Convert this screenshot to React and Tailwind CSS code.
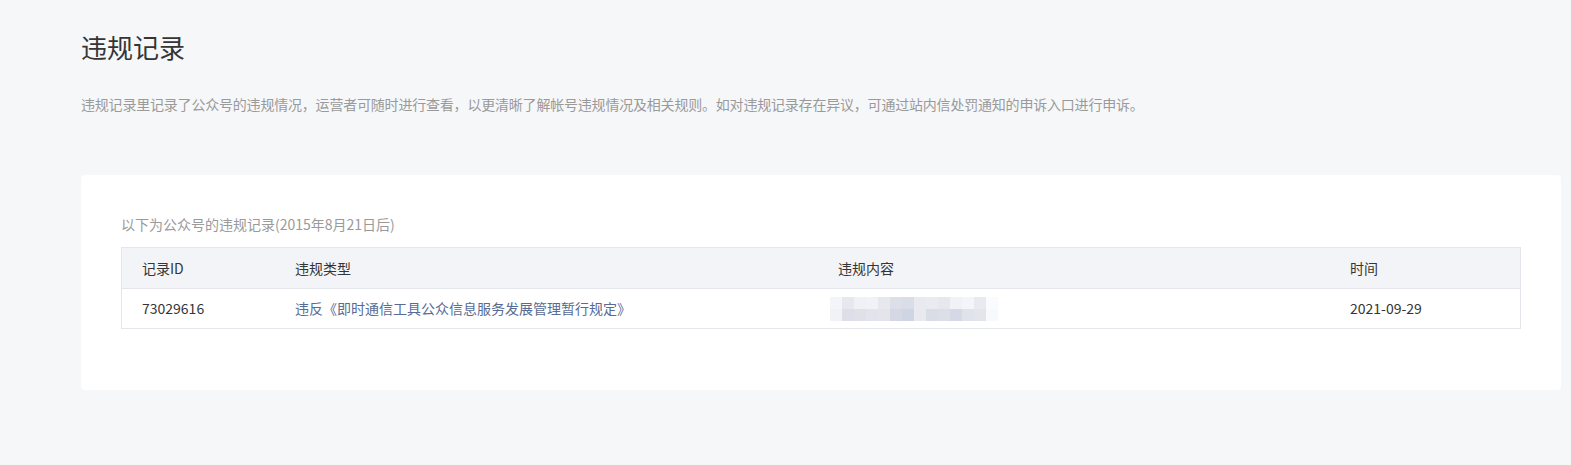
const blurTop = ["#f4f5f8", "#e6e8ee", "#f0f1f4", "#f1f2f5", "#e6e8ee", "#dcdfe8", "#d9dde8", "#e8eaef", "#eaebf0", "#e6e8ee", "#f1f2f5", "#f4f5f8", "#e8eaef", "#fafbfc"];
const blurBottom = ["#f1f2f5", "#dcdfe8", "#e0e1e8", "#e1e4ec", "#e4e4ea", "#d4d8e4", "#cfd5e3", "#e8eaef", "#dadce6", "#dcdfe8", "#d6d9e5", "#e1e3ea", "#e3e5ec", "#f8f9fb"];

const BlurredText = () => (
  <div className="flex flex-col">
    <div className="flex">
      {blurTop.map((c, i) => (
        <div key={i} className="w-[12px] h-[12px]" style={{ backgroundColor: c }} />
      ))}
    </div>
    <div className="flex">
      {blurBottom.map((c, i) => (
        <div key={i} className="w-[12px] h-[12px]" style={{ backgroundColor: c }} />
      ))}
    </div>
  </div>
);

const App = () => {
  return (
    <div
      className="min-h-[465px] bg-[#f6f7f9] pl-[81px] pr-[10px] pt-[27px]"
      style={{ fontFamily: '"Noto Sans CJK SC", "Liberation Sans", sans-serif' }}
    >
      {/* Header */}
      <h1 className="text-[26px] leading-[40px] text-[#353535] font-normal">违规记录</h1>
      <p className="mt-[26px] text-[14px] leading-[22px] text-[#9a9a9a] tracking-[-0.2px]">
        违规记录里记录了公众号的违规情况，运营者可随时进行查看，以更清晰了解帐号违规情况及相关规则。如对违规记录存在异议，可通过站内信处罚通知的申诉入口进行申诉。
      </p>

      {/* Card */}
      <div className="mt-[60px] bg-white rounded-[4px] px-[40px] pt-[38px] pb-[61px]">
        <p className="text-[14px] leading-[22px] text-[#9a9a9a] mb-[12px]">
          以下为公众号的违规记录(2015年8月21日后)
        </p>
        <div className="border border-[#e4e6eb] text-[14px] text-[#353535]">
          <div className="flex items-center h-[41px] bg-[#f3f4f7] border-b border-[#e4e6eb]">
            <div className="w-[153px] pl-[20px]">记录ID</div>
            <div className="w-[543px] pl-[20px]">违规类型</div>
            <div className="w-[512px] pl-[20px]">违规内容</div>
            <div className="flex-1 pl-[20px]">时间</div>
          </div>
          <div className="flex items-center h-[39px]">
            <div className="w-[153px] pl-[20px]">73029616</div>
            <div className="w-[543px] pl-[20px] text-[#576b95]">
              违反《即时通信工具公众信息服务发展管理暂行规定》
            </div>
            <div className="w-[512px] pl-[12px]">
              <BlurredText />
            </div>
            <div className="flex-1 pl-[20px]">2021-09-29</div>
          </div>
        </div>
      </div>
    </div>
  );
};

export default App;
